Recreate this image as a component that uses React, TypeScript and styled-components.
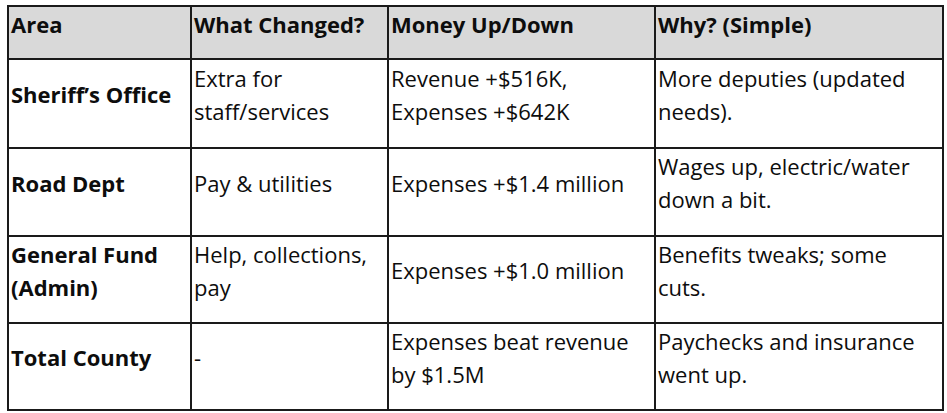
import styled, { createGlobalStyle } from 'styled-components';

const GlobalStyle = createGlobalStyle`
  html, body {
    margin: 0;
    background: #ffffff;
  }
  body {
    font-family: 'Open Sans', 'Noto Sans', 'Liberation Sans', sans-serif;
    color: #0d0d0d;
  }
`;

const Page = styled.div`
  padding: 5px 0 0 7px;
`;

const Table = styled.table`
  border-collapse: collapse;
  table-layout: fixed;
  width: 935px;
  font-size: 22px;
  line-height: 33px;
`;

const Row = styled.tr<{ $h: number }>`
  height: ${(p) => p.$h}px;
`;

const HeadCell = styled.th`
  background: #d9d9d9;
  border: 2px solid #1a1a1a;
  padding: 0 2px 18px 2px;
  line-height: 30px;
  text-align: left;
  vertical-align: middle;
  font-weight: 700;
`;

const Cell = styled.td<{ $bold?: boolean }>`
  border: 2px solid #1a1a1a;
  padding: 0 2px 18px 2px;
  vertical-align: middle;
  font-weight: ${(p) => (p.$bold ? 700 : 400)};
`;

const columns = [183, 197, 267, 288];
const headers = ['Area', 'What Changed?', 'Money Up/Down', 'Why? (Simple)'];

const rows = [
  {
    h: 89,
    cells: [
      'Sheriff’s Office',
      'Extra for staff/services',
      'Revenue +$516K, Expenses +$642K',
      'More deputies (updated needs).',
    ],
  },
  {
    h: 88,
    cells: ['Road Dept', 'Pay & utilities', 'Expenses +$1.4 million', 'Wages up, electric/water down a bit.'],
  },
  {
    h: 87,
    cells: [
      'General Fund (Admin)',
      'Help, collections, pay',
      'Expenses +$1.0 million',
      'Benefits tweaks; some cuts.',
    ],
  },
  {
    h: 87,
    cells: ['Total County', '-', 'Expenses beat revenue by $1.5M', 'Paychecks and insurance went up.'],
  },
];

function App() {
  return (
    <>
      <GlobalStyle />
      <Page>
        <Table>
          <colgroup>
            {columns.map((w, i) => (
              <col key={i} style={{ width: w }} />
            ))}
          </colgroup>
          <thead>
            <Row $h={53}>
              {headers.map((h) => (
                <HeadCell key={h}>{h}</HeadCell>
              ))}
            </Row>
          </thead>
          <tbody>
            {rows.map((r) => (
              <Row key={r.cells[0]} $h={r.h}>
                {r.cells.map((c, i) => (
                  <Cell key={i} $bold={i === 0}>
                    {c}
                  </Cell>
                ))}
              </Row>
            ))}
          </tbody>
        </Table>
      </Page>
    </>
  );
}

export default App;
